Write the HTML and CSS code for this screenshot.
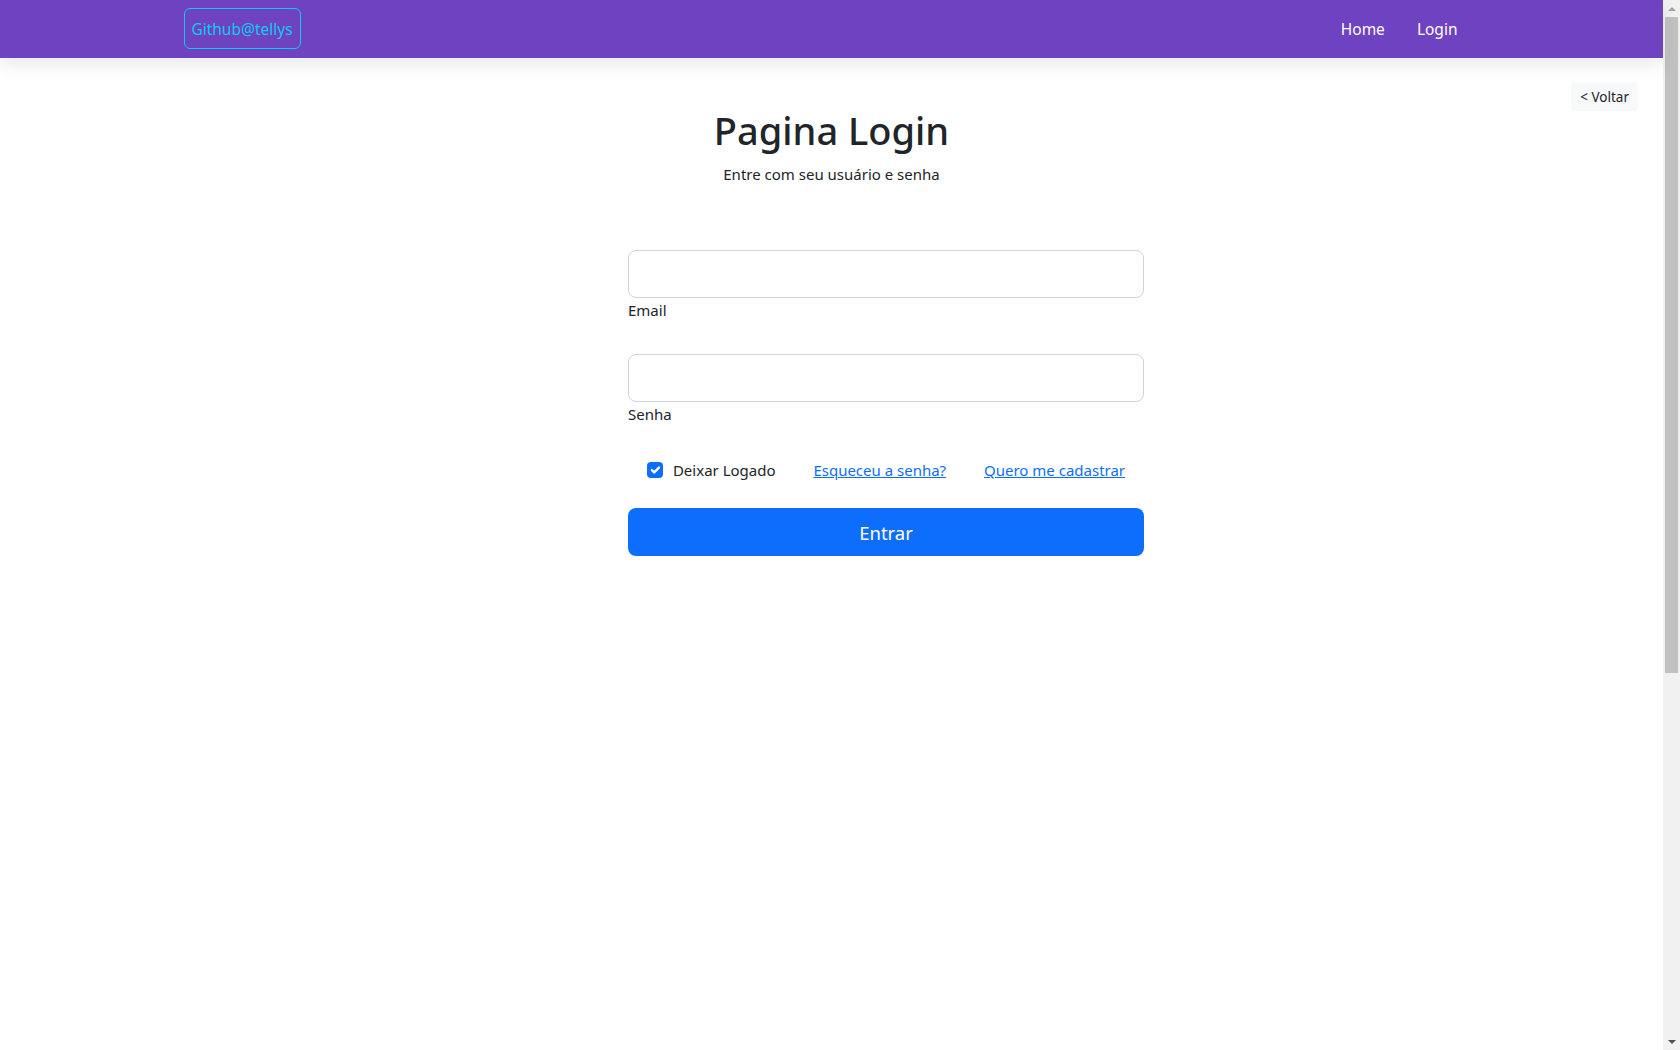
FILE: index.html
```html
<!DOCTYPE html>
<html lang="pt-BR">
<head>
<meta charset="utf-8">
<title>Pagina Login</title>
<link rel="stylesheet" href="styles.css">
</head>
<body>
<div class="app">
  <nav class="navbar">
    <div class="nav-inner">
      <a class="brand" href="#">Github@tellys</a>
      <ul class="nav-links">
        <li><a href="#">Home</a></li>
        <li><a href="#">Login</a></li>
      </ul>
    </div>
  </nav>
  <main class="page">
    <header class="page-head">
      <div class="head-side"></div>
      <div class="titles">
        <h1 class="title">Pagina Login</h1>
        <p class="subtitle">Entre com seu usuário e senha</p>
      </div>
      <div class="head-side head-back">
        <button class="btn-back" type="button">&lt; Voltar</button>
      </div>
    </header>
    <form class="login-form">
      <div class="field">
        <input class="input" type="email" id="email">
        <label class="field-label" for="email">Email</label>
      </div>
      <div class="field">
        <input class="input" type="password" id="senha">
        <label class="field-label" for="senha">Senha</label>
      </div>
      <div class="options">
        <label class="check">
          <span class="check-box"><svg viewBox="0 0 20 20" width="16" height="16"><path d="M6 10l3 3l6-6" fill="none" stroke="#fff" stroke-width="3" stroke-linecap="round" stroke-linejoin="round"/></svg></span>
          <span>Deixar Logado</span>
        </label>
        <a class="link" href="#">Esqueceu a senha?</a>
        <a class="link" href="#">Quero me cadastrar</a>
      </div>
      <button class="btn-submit" type="submit">Entrar</button>
    </form>
  </main>
</div>
<div class="scrollbar" aria-hidden="true">
  <div class="sb-btn"><span class="sb-arrow sb-up"></span></div>
  <div class="sb-track"><div class="sb-thumb"></div></div>
  <div class="sb-btn"><span class="sb-arrow sb-down"></span></div>
</div>
</body>
</html>
```
FILE: styles.css
```css
* { box-sizing: border-box; }
html, body { margin: 0; padding: 0; }
body {
  display: flex;
  height: 100vh;
  overflow: hidden;
  font-family: "Noto Sans", "Open Sans", "DejaVu Sans", sans-serif;
  font-size: 15px;
  color: #212529;
  background: #fff;
}
.app {
  flex: 1;
  min-width: 0;
}
.navbar {
  position: relative;
  z-index: 2;
  height: 58px;
  background: #6f42c1;
  box-shadow: 0 8px 16px rgba(0, 0, 0, 0.08);
}
.nav-inner {
  max-width: 1320px;
  height: 100%;
  margin: 0 auto;
  padding: 0 12px;
  display: flex;
  align-items: center;
}
.brand {
  display: inline-flex;
  align-items: center;
  justify-content: center;
  width: 117px;
  height: 41px;
  margin-top: -1px;
  border: 1px solid #0dcaf0;
  border-radius: 6px;
  color: #0dcaf0;
  font-size: 15.5px;
  text-decoration: none;
}
.nav-links {
  list-style: none;
  margin: 0 6px 0 auto;
  padding: 0;
  display: flex;
}
.nav-links a {
  display: block;
  padding: 8px 16px;
  color: #fff;
  font-size: 15.5px;
  text-decoration: none;
}
.page-head {
  display: grid;
  grid-template-columns: 1fr auto 1fr;
  align-items: start;
  padding-top: 24px;
}
.head-back {
  display: flex;
  justify-content: flex-end;
  padding-right: 25px;
}
.btn-back {
  height: 29px;
  padding: 0 9px;
  border: none;
  border-radius: 4px;
  background: #f8f9fa;
  color: #212529;
  font-family: inherit;
  font-size: 13.5px;
  cursor: pointer;
}
.titles {
  padding-top: 26px;
  text-align: center;
}
.title {
  margin: 0 0 9px;
  font-size: 38px;
  font-weight: 500;
  line-height: 1.2;
}
.subtitle {
  margin: 0;
  font-size: 15px;
  line-height: 22.5px;
}
.login-form {
  width: 516px;
  margin: 65px 0 0 628px;
}
.field {
  display: flex;
  flex-direction: column;
  margin-bottom: 32px;
}
.input {
  display: block;
  width: 100%;
  height: 48px;
  padding: 8px 16px;
  border: 1px solid #ced4da;
  border-radius: 8px;
  background: #fff;
  font-family: inherit;
  font-size: 18px;
  color: #212529;
  outline: none;
}
.field-label {
  font-size: 15px;
  line-height: 24px;
}
.options {
  display: flex;
  justify-content: space-around;
  align-items: center;
  height: 24px;
  margin-bottom: 26px;
  line-height: 24px;
}
.check {
  display: flex;
  align-items: center;
  gap: 10px;
  cursor: pointer;
}
.check-box {
  display: inline-flex;
  width: 16px;
  height: 16px;
  border-radius: 4px;
  background: #0d6efd;
}
.link {
  color: #0d6efd;
  text-decoration: underline;
}
.btn-submit {
  display: block;
  width: 100%;
  height: 48px;
  border: none;
  border-radius: 8px;
  background: #0d6efd;
  color: #fff;
  font-family: inherit;
  font-size: 18.5px;
  cursor: pointer;
}
.scrollbar {
  flex: none;
  width: 17px;
  height: 100vh;
  display: flex;
  flex-direction: column;
  background: #f1f1f1;
}
.sb-btn {
  flex: none;
  height: 17px;
  display: flex;
  align-items: center;
  justify-content: center;
}
.sb-track {
  flex: 1;
}
.sb-thumb {
  height: 656px;
  margin: 0 2px;
  background: #c1c1c1;
}
.sb-arrow {
  width: 0;
  height: 0;
  border-left: 4px solid transparent;
  border-right: 4px solid transparent;
}
.sb-up {
  border-bottom: 4px solid #a3a3a3;
}
.sb-down {
  border-top: 4px solid #505050;
}
```
